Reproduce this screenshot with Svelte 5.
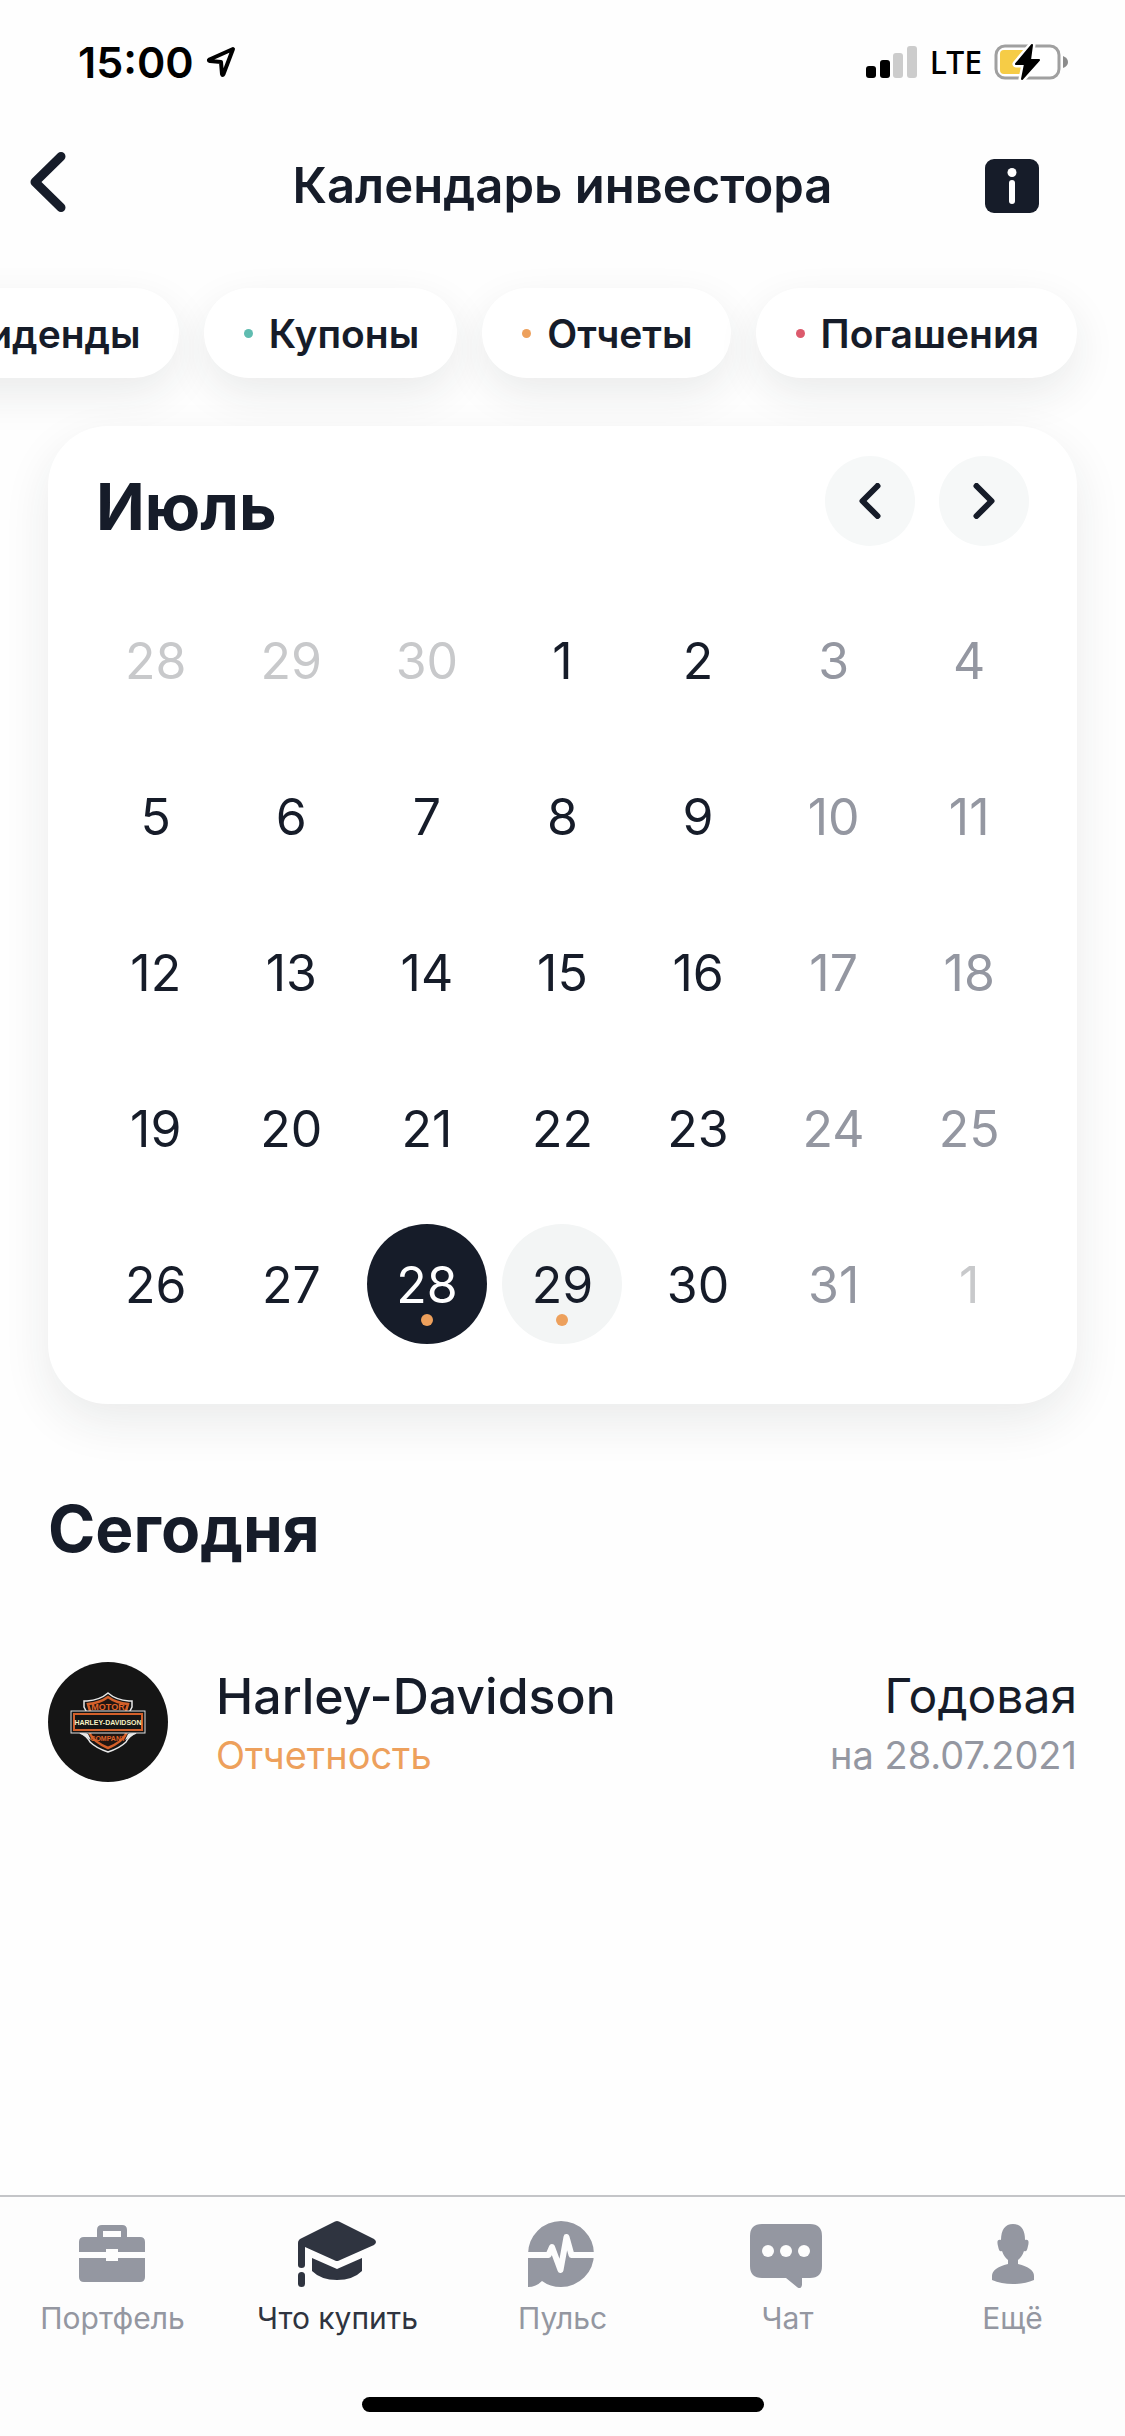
<script lang="ts">
  interface Day {
    n: number;
    outside?: boolean;
    event?: boolean;
  }

  const filters = [
    { name: "Дивиденды", color: "blue" },
    { name: "Купоны", color: "teal" },
    { name: "Отчеты", color: "orange" },
    { name: "Погашения", color: "red" },
  ];

  const tabs = [
    { id: "portfolio", name: "Портфель" },
    { id: "invest", name: "Что купить" },
    { id: "pulse", name: "Пульс" },
    { id: "chat", name: "Чат" },
    { id: "more", name: "Ещё" },
  ];

  const TODAY = 28;

  const days: Day[] = [
    ...[28, 29, 30].map((n) => ({ n, outside: true })),
    ...Array.from({ length: 31 }, (_, i) => ({
      n: i + 1,
      event: i + 1 === 28 || i + 1 === 29,
    })),
    { n: 1, outside: true },
  ];

  let selected = $state(TODAY);
  let activeTab = $state("invest");

  function pick(day: Day) {
    if (!day.outside) selected = day.n;
  }
</script>

<div class="screen">
  <div class="status">
    <div class="status-side">
      <span class="status-time">15:00</span>
      <svg class="location" viewBox="0 0 30 32" aria-hidden="true">
        <path d="M27 3 3.500 13.500q-1.500 1 .5 1.500L15 16l1 12q.5 2 1.500 0Z" />
      </svg>
    </div>
    <div class="status-side">
      <svg class="signal" viewBox="0 0 52 34" aria-hidden="true">
        <rect x="0" y="21" width="10" height="12" rx="3" />
        <rect x="14" y="15" width="10" height="18" rx="3" />
        <rect class="off" x="27" y="8" width="10" height="25" rx="3" />
        <rect class="off" x="41" y="1" width="10" height="32" rx="3" />
      </svg>
      <span class="status-net">LTE</span>
      <svg class="battery" viewBox="0 0 74 38" aria-hidden="true">
        <rect x="2" y="3" width="63" height="32" rx="9" fill="#fff" stroke="#a0a0a0" stroke-width="3" />
        <path d="M10 7h24v24H10q-4 0-4-4V11q0-4 4-4Z" fill="#f6cc46" />
        <path d="M69 13q5 2 5 6t-5 6Z" fill="#8c8c8c" />
        <path d="M38 2 22 21h9l-3 15 17-19h-9Z" fill="#000" stroke="#fff" stroke-width="7" stroke-linejoin="round" />
        <path d="M38 2 22 21h9l-3 15 17-19h-9Z" fill="#000" stroke="#000" stroke-width="2" stroke-linejoin="round" />
      </svg>
    </div>
  </div>

  <header class="header">
    <button class="icon-btn" aria-label="Назад">
      <svg class="back" viewBox="0 0 36 68"><path d="M31 4.500 5 30l26 25.500" /></svg>
    </button>
    <h1>Календарь инвестора</h1>
    <button class="icon-btn info" aria-label="Информация">
      <svg viewBox="0 0 54 54">
        <rect width="54" height="54" rx="9" fill="#161c29" />
        <circle cx="27" cy="13.500" r="4.500" fill="#fff" />
        <rect x="24" y="21" width="6" height="24" rx="3" fill="#fff" />
      </svg>
    </button>
  </header>

  <div class="filters">
    {#each filters as f}
      <button class="chip"><span class="dot {f.color}"></span>{f.name}</button>
    {/each}
  </div>

  <main>
    <section class="card">
      <div class="card-head">
        <h2>Июль</h2>
        <div class="card-nav">
          <button class="round" aria-label="Предыдущий месяц">
            <svg viewBox="0 0 22 36"><path d="M18.500 3 3.500 18l15 15" /></svg>
          </button>
          <button class="round" aria-label="Следующий месяц">
            <svg viewBox="0 0 22 36"><path d="m3.500 3 15 15-15 15" /></svg>
          </button>
        </div>
      </div>
      <div class="grid">
        {#each days as day, i}
          <button
            class="day"
            class:weekend={i % 7 > 4}
            class:outside={day.outside}
            class:event={day.event}
            class:selected={!day.outside && day.n === selected}
            onclick={() => pick(day)}
          >
            {day.n}
            {#if day.event}<span class="mark"></span>{/if}
          </button>
        {/each}
      </div>
    </section>

    <section class="events">
      <h2>Сегодня</h2>
      <a class="event-row" href="#harley">
        <svg class="logo" viewBox="0 0 120 120" aria-hidden="true">
          <circle cx="60" cy="60" r="60" fill="#151515" />
          <path d="M60 31q8 7 21 8h3v6l-2 4v22h6q-7 3-10 9-6 6-18 10-12-4-18-10-3-6-10-9h6V49l-2-4v-6h3q13-1 21-8Z" fill="#151515" stroke="#e8e8e8" stroke-width="1.500" />
          <path d="M60 35q8 6 20 7l-2 7v23q-4 8-18 14-14-6-18-14V49l-2-7q12-1 20-7Z" fill="#201612" stroke="#d4602a" stroke-width="2.500" />
          <path d="m32 71 8 1 3 6ZM88 71l-8 1-3 6Z" fill="#e8e8e8" />
          <text x="60" y="48" class="logo-motor">MOTOR</text>
          <text x="60" y="79" class="logo-company">COMPANY</text>
          <rect x="23" y="49" width="74" height="22" fill="#151515" stroke="#e0e0e0" stroke-width="1" />
          <rect x="26" y="52" width="68" height="16" fill="#151515" stroke="#d4602a" stroke-width="2" />
          <text x="60" y="63" class="logo-name">HARLEY-DAVIDSON</text>
        </svg>
        <div class="event-main">
          <span class="event-name">Harley-Davidson</span>
          <span class="event-kind">Отчетность</span>
        </div>
        <div class="event-side">
          <span class="event-period">Годовая</span>
          <span class="event-date">на 28.07.2021</span>
        </div>
      </a>
    </section>
  </main>

  <footer class="footer">
    <nav class="tabs">
      {#each tabs as tab}
        <button class="tab" class:active={tab.id === activeTab} onclick={() => (activeTab = tab.id)}>
          <svg viewBox="1 0 80 68" aria-hidden="true">
            {#if tab.id === "portfolio"}
              <path d="M7 32V22q0-5 5-5h13v-7q0-5 5-5h20q5 0 5 5v7h13q5 0 5 5v10H46v-3H34v3ZM31 17h18v-6H31ZM7 38h27v3h12v-3h27v19q0 5-5 5H12q-5 0-5-5Z" fill-rule="evenodd" />
            {:else if tab.id === "invest"}
              <path d="M38 1.500q2-1 4 0l35 17.500q4 3 0 6L42 40.500q-2 1-4 0L8 27v18q0 3-3.500 3T1 45V23q0-3 3-4.500Z" />
              <rect x="1" y="52" width="7" height="15" rx="3.500" />
              <path d="m15 38 25 11 25-11v13Q56 60 40 60T15 51Z" />
            {:else if tab.id === "pulse"}
              <path d="M39 1a33 33 0 1 1 0 66q-11 0-19-6-6 6-14 6V34A33 33 0 0 1 39 1Z" />
              <path class="cut" d="M5 35h21.500l3.500-8 8.500 23 6-33 5 18H74" />
            {:else if tab.id === "chat"}
              <path d="M15 4h48q12 0 12 12v30q0 12-12 12h-8v7q-1 5-5 2L39 58H15Q3 58 3 46V16Q3 4 15 4Z" />
              <g fill="#fdfdfd">
                <circle cx="21" cy="31" r="6" />
                <circle cx="39" cy="31" r="6" />
                <circle cx="57" cy="31" r="6" />
              </g>
            {:else}
              <path d="M41 4c8 0 12 6 12 16 4-1 4 2 3 6-1 5-2 6-4 5q-2 6-6 9v4q16 4 16 12v4q-9 4-21 4t-21-4v-4q0-8 16-12v-4q-4-3-6-9c-2 1-3 0-4-5-1-4-1-7 3-6 0-10 4-16 12-16Z" />
            {/if}
          </svg>
          <span>{tab.name}</span>
        </button>
      {/each}
    </nav>
    <div class="home-bar"></div>
  </footer>
</div>

<style>
  :global(body) {
    margin: 0;
    background: #fff;
  }

  .screen {
    display: flex;
    flex-direction: column;
    min-height: 100vh;
    overflow: hidden;
    background: #fefefe;
    color: #161c29;
    font-family: Inter, "Noto Sans", sans-serif;
  }

  button {
    padding: 0;
    border: 0;
    background: none;
    color: inherit;
    font: inherit;
    cursor: pointer;
  }

  h1,
  h2 {
    margin: 0;
  }

  .status {
    display: flex;
    align-items: center;
    justify-content: space-between;
    height: 124px;
    padding: 0 57px 0 78px;
    color: #000;
  }

  .status-side {
    display: flex;
    align-items: center;
    gap: 12px;
  }

  .status-time {
    font-size: 43px;
    font-weight: 600;
  }

  .status-net {
    font-family: "Noto Sans", sans-serif;
    font-size: 32px;
    font-weight: 500;
    line-height: 40px;
  }

  .location {
    width: 30px;
    height: 32px;
    fill: none;
    stroke: #000;
    stroke-width: 4;
    stroke-linejoin: round;
  }

  .signal {
    width: 52px;
    height: 34px;
  }

  .signal .off {
    fill: #ccc;
  }

  .battery {
    width: 74px;
    height: 38px;
  }

  .header {
    display: grid;
    grid-template-columns: 110px 1fr 110px;
    align-items: center;
    height: 124px;
    padding: 0 30px;
  }

  .header h1 {
    font-size: 49px;
    font-weight: 600;
    line-height: 64px;
    text-align: center;
    white-space: nowrap;
  }

  .icon-btn {
    display: flex;
  }

  .icon-btn svg {
    width: 54px;
    height: 54px;
  }

  .icon-btn .back {
    width: 36px;
    height: 68px;
    fill: none;
    stroke: #161c29;
    stroke-width: 9;
    stroke-linecap: round;
    stroke-linejoin: round;
  }

  .filters {
    display: flex;
    justify-content: flex-end;
    gap: 25px;
    padding: 40px 48px 48px;
  }

  .chip {
    display: flex;
    flex-shrink: 0;
    align-items: center;
    gap: 16px;
    height: 90px;
    padding: 0 38px 0 40px;
    border-radius: 45px;
    background: #fff;
    box-shadow: 0 16px 44px rgba(30, 45, 40, 0.09);
    font-size: 39px;
    font-weight: 600;
  }

  .dot {
    width: 9px;
    height: 9px;
    border-radius: 50%;
  }

  .blue {
    background: #4a7fe0;
  }

  .teal {
    background: #5fbcb0;
  }

  .orange {
    background: #eda05c;
  }

  .red {
    background: #dc5a6c;
  }

  main {
    flex: 1;
    padding: 0 48px;
  }

  .card {
    position: relative;
    padding: 30px 40px 60px;
    border-radius: 60px;
    background: #fff;
    box-shadow: 0 18px 48px rgba(30, 45, 40, 0.09);
  }

  .card-head {
    display: flex;
    align-items: flex-end;
    justify-content: space-between;
    padding: 0 8px;
  }

  h2 {
    font-size: 64px;
    font-weight: 700;
    line-height: 78px;
  }

  .card-nav {
    display: flex;
    gap: 24px;
  }

  .round {
    display: flex;
    align-items: center;
    justify-content: center;
    width: 90px;
    height: 90px;
    border-radius: 50%;
    background: #f6f8f8;
  }

  .round svg {
    width: 22px;
    height: 36px;
    fill: none;
    stroke: #161c29;
    stroke-width: 6;
    stroke-linecap: round;
    stroke-linejoin: round;
  }

  .grid {
    display: grid;
    grid-template-columns: repeat(7, 1fr);
    justify-items: center;
    row-gap: 36px;
    margin-top: 54px;
  }

  .day {
    position: relative;
    width: 120px;
    height: 120px;
    padding-top: 2px;
    border-radius: 50%;
    font-size: 50px;
  }

  .day.weekend {
    color: #9497a1;
  }

  .day.outside {
    color: #c8c9cb;
  }

  .day.event {
    background: #f3f5f5;
  }

  .day.selected {
    background: #161c29;
    color: #fff;
  }

  .mark {
    position: absolute;
    bottom: 18px;
    left: 54px;
    width: 12px;
    height: 12px;
    border-radius: 50%;
    background: #eda05c;
  }

  .events {
    padding-top: 86px;
  }

  .event-row {
    display: flex;
    gap: 48px;
    margin-top: 94px;
    color: inherit;
    text-decoration: none;
  }

  .logo {
    flex-shrink: 0;
    width: 120px;
    height: 120px;
  }

  .logo text {
    font-family: "Liberation Sans Narrow", "Liberation Sans", sans-serif;
    font-weight: 700;
    text-anchor: middle;
  }

  .logo-motor {
    fill: #e0652a;
    font-size: 9px;
  }

  .logo-company {
    fill: #e0652a;
    font-size: 7px;
  }

  .logo-name {
    fill: #f6efc4;
    font-size: 7px;
  }

  .event-main,
  .event-side {
    display: flex;
    flex-direction: column;
    padding-top: 2px;
  }

  .event-main {
    flex: 1;
  }

  .event-side {
    align-items: flex-end;
  }

  .event-name,
  .event-period {
    line-height: 64px;
  }

  .event-name {
    font-size: 50px;
    font-weight: 500;
  }

  .event-period {
    font-size: 48px;
  }

  .event-kind,
  .event-date {
    font-size: 38px;
    line-height: 54px;
  }

  .event-kind {
    color: #eda05c;
  }

  .event-date {
    color: #9497a1;
  }

  .footer {
    padding: 23px 0 24px;
    border-top: 2px solid #c4c5c8;
    background: #fdfdfd;
  }

  .tabs {
    display: grid;
    grid-template-columns: repeat(5, 1fr);
  }

  .tab {
    display: flex;
    flex-direction: column;
    align-items: center;
    gap: 10px;
    color: #9497a1;
    font-size: 30px;
    line-height: 40px;
  }

  .tab svg {
    width: 80px;
    height: 68px;
    fill: currentColor;
  }

  .tab .cut {
    fill: none;
    stroke: #fdfdfd;
    stroke-width: 6;
    stroke-linejoin: round;
  }

  .tab.active {
    color: #2f3440;
  }

  .home-bar {
    width: 402px;
    height: 15px;
    margin: 59px auto 0;
    border-radius: 8px;
    background: #000;
  }
</style>
